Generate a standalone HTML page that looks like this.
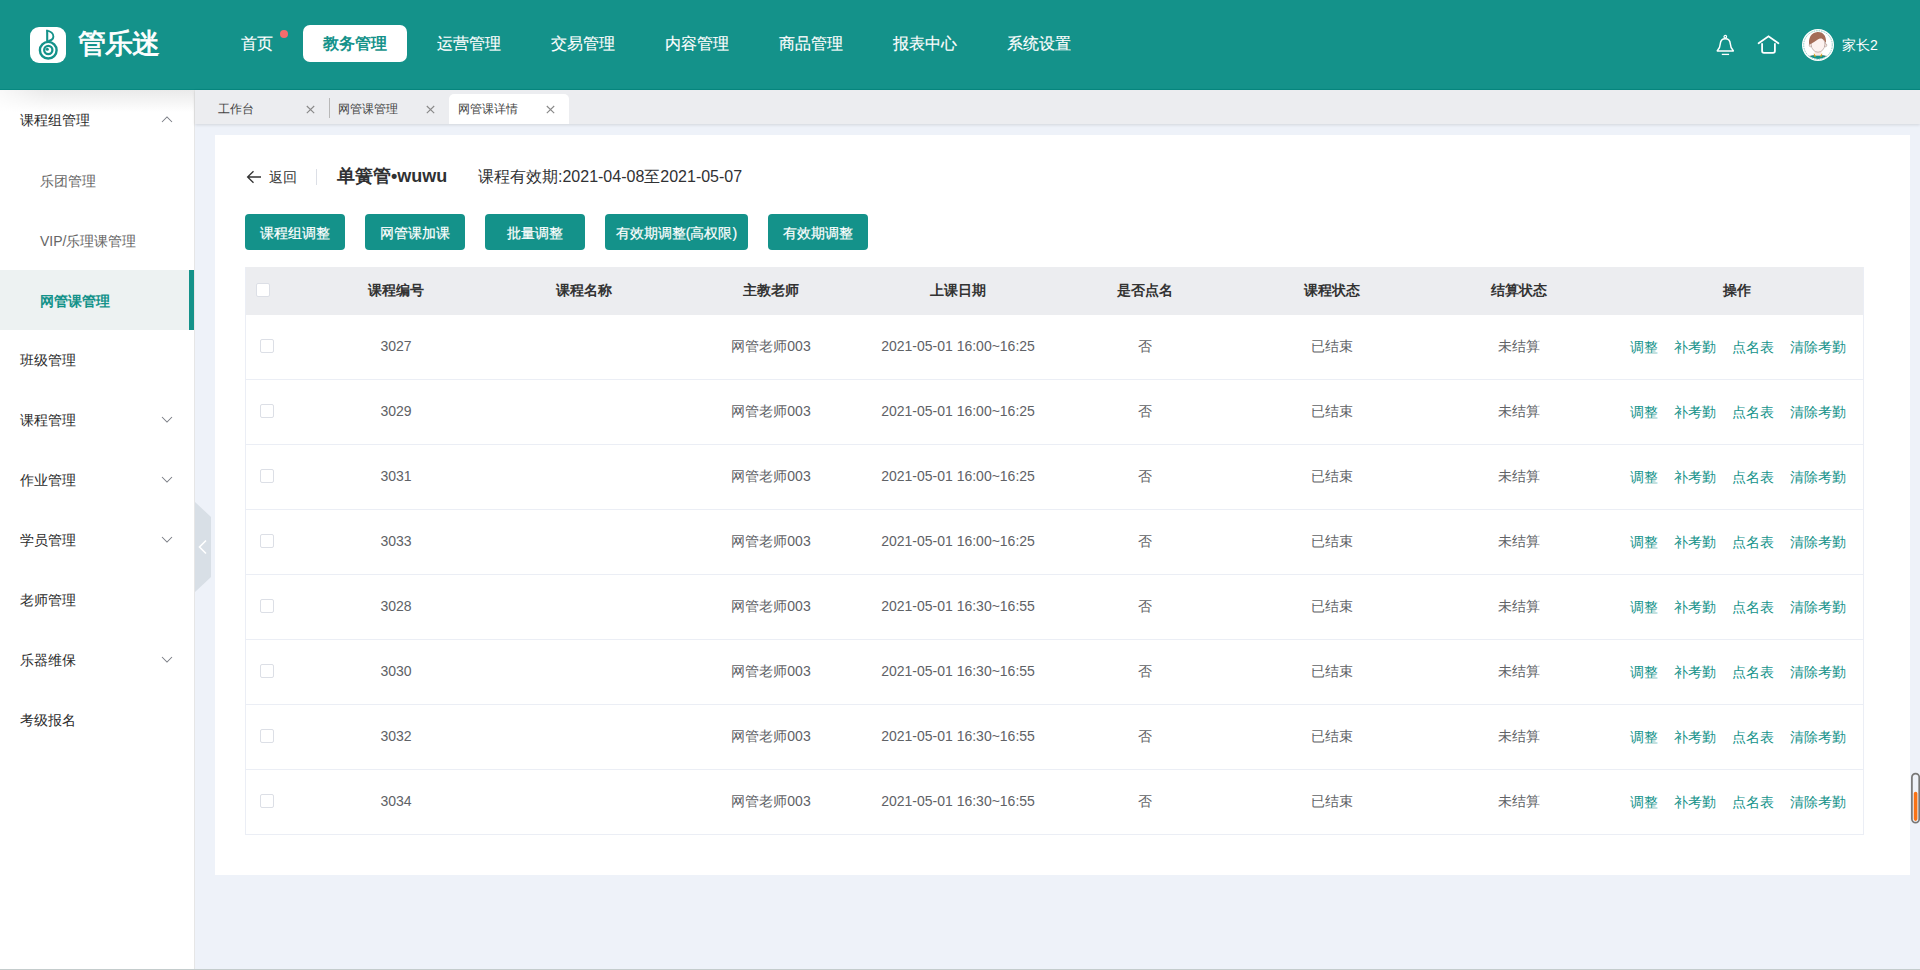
<!DOCTYPE html>
<html><head><meta charset="utf-8"><style>
*{box-sizing:border-box;margin:0;padding:0}
html,body{width:1920px;height:970px;overflow:hidden}
body{font-family:"Liberation Sans",sans-serif;background:#eef2f9;position:relative;color:#333}
.abs{position:absolute}
#hdr{left:0;top:0;width:1920px;height:90px;background:#14928a;border-bottom:1px solid #078880}
.logo{left:30px;top:27px;width:36px;height:36px;background:#fff;border-radius:9px}
.logo svg{display:block}
.brand{left:78px;top:26px;font-size:28px;line-height:36px;color:#fff;letter-spacing:-1px;-webkit-text-stroke:0.8px #fff}
.nav{top:25px;height:37px;line-height:37px;font-size:16px;color:#fff;white-space:nowrap;-webkit-text-stroke:0.15px #fff}
.nav.on{background:#fff;color:#14928a;-webkit-text-stroke:0;border-radius:7px;font-weight:bold;width:104px;text-align:center}
.dot{left:280px;top:30px;width:8px;height:8px;border-radius:50%;background:#f56c6c}
.uname{left:1842px;top:36px;font-size:14px;line-height:18px;color:#fff}
#side{left:0;top:90px;width:195px;height:880px;background:#fff;border-right:1px solid #e6e6e6}
#side .shade{left:0;top:0;width:194px;height:22px;background:linear-gradient(#eaeaea,#fff);-webkit-mask-image:linear-gradient(to right,rgba(0,0,0,.3) 0,#000 45px)}
.mi{left:20px;font-size:14px;color:#2b2b2b;line-height:20px;white-space:nowrap}
.si{left:40px;font-size:14px;color:#666;line-height:20px;white-space:nowrap}
.si.act{color:#14928a;font-weight:bold}
.sel{left:0;top:180px;width:194px;height:60px;background:#edf2f2;border-right:5px solid #14928a}
#tabs{left:195px;top:90px;width:1725px;height:34px;background:#ecedf0;box-shadow:0 1px 3px rgba(0,0,0,.12)}
.tab{top:102px;font-size:12px;color:#444;line-height:14px;white-space:nowrap}
#card{left:215px;top:135px;width:1695px;height:740px;background:#fff}
.btn{top:214px;height:36px;line-height:38px;-webkit-text-stroke:0.2px #fff;background:#14928a;color:#fff;font-size:14px;text-align:center;border-radius:4px;white-space:nowrap}
#tbl{left:245px;top:267px;width:1619px;height:568px;border:1px solid #ebeef5;border-top:none}
.th{top:267px;left:245px;width:1619px;height:48px;background:#ecedf0}
.hc{top:282px;font-size:14px;font-weight:bold;color:#333;text-align:center;line-height:16px}
.cb{width:14px;height:14px;border:1px solid #dcdfe6;border-radius:2px;background:#fff}
.row{left:245px;width:1619px;height:65px;border-bottom:1px solid #ebeef5}
.c{font-size:14px;color:#606266;text-align:center;line-height:16px;white-space:nowrap}
.op{font-size:14px;color:#14928a;line-height:16px;white-space:nowrap}

</style></head><body>
<div id="hdr" class="abs">
<div class="logo abs"><svg width="36" height="36" viewBox="0 0 36 36">
<path d="M17.2 14.4 V2.8" fill="none" stroke="#14928a" stroke-width="2.1"/>
<path d="M16.4 3.6 C20.8 3.8 23.6 6.8 23.4 9.6 C23.2 12.2 21 13.6 18.2 13.9" fill="none" stroke="#14928a" stroke-width="1.9" stroke-linejoin="round"/>
<circle cx="18.25" cy="23.2" r="8.35" fill="none" stroke="#14928a" stroke-width="2.4"/>
<circle cx="18.3" cy="23" r="4.1" fill="none" stroke="#14928a" stroke-width="2.3"/>
<circle cx="17.3" cy="22.2" r="1.5" fill="#14928a"/>
</svg></div>
<div class="brand abs">管乐迷</div>
<div class="dot abs"></div>
<div class="nav abs" style="left:241px">首页</div>
<div class="nav abs on" style="left:303px">教务管理</div>
<div class="nav abs" style="left:437px">运营管理</div>
<div class="nav abs" style="left:551px">交易管理</div>
<div class="nav abs" style="left:665px">内容管理</div>
<div class="nav abs" style="left:779px">商品管理</div>
<div class="nav abs" style="left:893px">报表中心</div>
<div class="nav abs" style="left:1007px">系统设置</div>
<svg class="abs" style="left:1714px;top:33px" width="22" height="24" viewBox="0 0 22 24">
<ellipse cx="11.3" cy="3.7" rx="1.3" ry="1.25" fill="none" stroke="#fff" stroke-width="1.2"/>
<path d="M11.3 5.7 C8.1 5.7 6.5 7.8 6.3 10.8 C6.1 14 5.4 15.6 3.6 17.3 C3 17.9 3.2 18.1 4 18.1 H18.6 C19.4 18.1 19.6 17.9 19 17.3 C17.2 15.6 16.5 14 16.3 10.8 C16.1 7.8 14.5 5.7 11.3 5.7 Z" fill="none" stroke="#fff" stroke-width="1.5" stroke-linejoin="round"/>
<path d="M7.8 21.4 H15.1" stroke="#fff" stroke-width="1.3"/>
</svg>
<svg class="abs" style="left:1756px;top:33px" width="25" height="23" viewBox="0 0 25 23">
<path d="M2.6 10.2 L12.5 3.3 L22.4 10.2" fill="none" stroke="#fff" stroke-width="1.8" stroke-linejoin="miter" stroke-linecap="round"/>
<path d="M6.1 10.3 V18 Q6.1 19.9 8 19.9 H17 Q18.9 19.9 18.9 18 V10.3" fill="none" stroke="#fff" stroke-width="1.8"/>
</svg>
<svg class="abs" style="left:1800px;top:27px" width="36" height="36" viewBox="0 0 36 36">
<defs><clipPath id="av"><circle cx="18" cy="18" r="13.9"/></clipPath></defs>
<circle cx="18" cy="18" r="16" fill="#fff"/>
<circle cx="18" cy="18" r="14.3" fill="none" stroke="#6fbfb8" stroke-width="0.8" stroke-dasharray="1.6 0.9"/>
<g clip-path="url(#av)">
<path d="M5 36 V31.6 Q9 28.6 14 28.2 H22 Q27 28.6 31 31.6 V36 Z" fill="#14928a" stroke="#4d5a58" stroke-width="0.45"/>
<rect x="14.6" y="22.6" width="6.8" height="6" fill="#fbe9e5"/>
<path d="M13.8 25.9 L16.1 29.4 L14.3 29.7 Z M22.2 25.9 L19.9 29.4 L21.7 29.7 Z" fill="#d9a20c"/>
<ellipse cx="10.6" cy="18.2" rx="1.4" ry="1.6" fill="#f6e7e4" stroke="#8a6d66" stroke-width="0.4"/>
<ellipse cx="25.4" cy="18.2" rx="1.4" ry="1.6" fill="#f6e7e4" stroke="#8a6d66" stroke-width="0.4"/>
<ellipse cx="18" cy="17.2" rx="6.9" ry="8" fill="#fdf2f0" stroke="#8a6d66" stroke-width="0.45"/>
<path d="M9.2 17.6 C8.2 11.4 11 5.6 17.6 5.1 C23.8 4.9 26.8 9.8 25.9 16.6 C25.2 14.2 24 12.6 22.4 11.9 C20.8 11.3 19.2 11.5 17.4 12.7 C15 14.3 12.6 16 9.2 17.6 Z" fill="#a46d58"/>
</g>
</svg>
<div class="uname abs">家长2</div>
</div>
<div id="side" class="abs"><div class="shade abs"></div>
<div class="sel abs"></div>
<div class="mi abs" style="top:20px">课程组管理</div>
<svg class="abs" style="left:161px;top:26px" width="12" height="7" viewBox="0 0 12 7"><path d="M1 6 L6 1 L11 6" fill="none" stroke="#7a7d85" stroke-width="1.05"/></svg>
<div class="si abs" style="top:81px">乐团管理</div>
<div class="si abs" style="top:141px">VIP/乐理课管理</div>
<div class="si act abs" style="top:201px">网管课管理</div>
<div class="mi abs" style="top:260px">班级管理</div>
<div class="mi abs" style="top:320px">课程管理</div>
<svg class="abs" style="left:161px;top:326px" width="12" height="7" viewBox="0 0 12 7"><path d="M1 1 L6 6 L11 1" fill="none" stroke="#7a7d85" stroke-width="1.05"/></svg>
<div class="mi abs" style="top:380px">作业管理</div>
<svg class="abs" style="left:161px;top:386px" width="12" height="7" viewBox="0 0 12 7"><path d="M1 1 L6 6 L11 1" fill="none" stroke="#7a7d85" stroke-width="1.05"/></svg>
<div class="mi abs" style="top:440px">学员管理</div>
<svg class="abs" style="left:161px;top:446px" width="12" height="7" viewBox="0 0 12 7"><path d="M1 1 L6 6 L11 1" fill="none" stroke="#7a7d85" stroke-width="1.05"/></svg>
<div class="mi abs" style="top:500px">老师管理</div>
<div class="mi abs" style="top:560px">乐器维保</div>
<svg class="abs" style="left:161px;top:566px" width="12" height="7" viewBox="0 0 12 7"><path d="M1 1 L6 6 L11 1" fill="none" stroke="#7a7d85" stroke-width="1.05"/></svg>
<div class="mi abs" style="top:620px">考级报名</div>
</div>
<svg class="abs" style="left:195px;top:502px" width="16" height="90" viewBox="0 0 16 90">
<path d="M0 0 L16 15 V75 L0 90 Z" fill="#d8dfe6"/>
<path d="M11 38.5 L4.5 45 L11 51.5" fill="none" stroke="#fff" stroke-width="1.6"/>
</svg>
<div id="tabs" class="abs"></div>
<div class="abs" style="left:449px;top:94px;width:120px;height:30px;background:#fff;border-radius:5px 5px 0 0"></div>
<div class="abs" style="left:329px;top:98px;width:1px;height:20px;background:#b8b8b8"></div>
<div class="tab abs" style="left:218px">工作台</div>
<svg class="abs tx" style="left:306px;top:105px" width="9" height="9" viewBox="0 0 9 9"><path d="M0.8 1 L8.2 8.2 M8.2 1 L0.8 8.2" stroke="#888" stroke-width="1.1"/></svg>
<div class="tab abs" style="left:338px">网管课管理</div>
<svg class="abs tx" style="left:426px;top:105px" width="9" height="9" viewBox="0 0 9 9"><path d="M0.8 1 L8.2 8.2 M8.2 1 L0.8 8.2" stroke="#888" stroke-width="1.1"/></svg>
<div class="tab abs" style="left:458px">网管课详情</div>
<svg class="abs tx" style="left:546px;top:105px" width="9" height="9" viewBox="0 0 9 9"><path d="M0.8 1 L8.2 8.2 M8.2 1 L0.8 8.2" stroke="#888" stroke-width="1.1"/></svg>
<div id="card" class="abs"></div>
<svg class="abs" style="left:246px;top:170px" width="16" height="14" viewBox="0 0 16 14"><path d="M15 7 H2 M7.5 1.2 L1.6 7 L7.5 12.8" fill="none" stroke="#333" stroke-width="1.3"/></svg>
<div class="abs" style="left:269px;top:168px;font-size:14px;line-height:18px;color:#333">返回</div>
<div class="abs" style="left:316px;top:169px;width:1px;height:16px;background:#dcdfe6"></div>
<div class="abs" style="left:337px;top:165px;font-size:18px;line-height:22px;font-weight:bold;color:#303133">单簧管•wuwu</div>
<div class="abs" style="left:478px;top:167px;font-size:16px;line-height:20px;color:#303133">课程有效期:2021-04-08至2021-05-07</div>
<div class="btn abs" style="left:245px;width:100px">课程组调整</div>
<div class="btn abs" style="left:365px;width:100px">网管课加课</div>
<div class="btn abs" style="left:485px;width:100px">批量调整</div>
<div class="btn abs" style="left:605px;width:143px">有效期调整(高权限)</div>
<div class="btn abs" style="left:768px;width:100px">有效期调整</div>
<div class="th abs"></div>
<div id="tbl" class="abs"></div>
<div class="cb abs" style="left:256px;top:283px"></div>
<div class="hc abs" style="left:296px;width:200px">课程编号</div>
<div class="hc abs" style="left:484px;width:200px">课程名称</div>
<div class="hc abs" style="left:671px;width:200px">主教老师</div>
<div class="hc abs" style="left:858px;width:200px">上课日期</div>
<div class="hc abs" style="left:1045px;width:200px">是否点名</div>
<div class="hc abs" style="left:1232px;width:200px">课程状态</div>
<div class="hc abs" style="left:1419px;width:200px">结算状态</div>
<div class="hc abs" style="left:1637px;width:200px">操作</div>
<div class="row abs" style="top:315px"></div>
<div class="cb abs" style="left:260px;top:339px"></div>
<div class="c abs" style="left:276px;width:240px;top:338px">3027</div>
<div class="c abs" style="left:651px;width:240px;top:338px">网管老师003</div>
<div class="c abs" style="left:838px;width:240px;top:338px">2021-05-01 16:00~16:25</div>
<div class="c abs" style="left:1025px;width:240px;top:338px">否</div>
<div class="c abs" style="left:1212px;width:240px;top:338px">已结束</div>
<div class="c abs" style="left:1399px;width:240px;top:338px">未结算</div>
<div class="op abs" style="left:1630px;top:339px">调整</div>
<div class="op abs" style="left:1674px;top:339px">补考勤</div>
<div class="op abs" style="left:1732px;top:339px">点名表</div>
<div class="op abs" style="left:1790px;top:339px">清除考勤</div>
<div class="row abs" style="top:380px"></div>
<div class="cb abs" style="left:260px;top:404px"></div>
<div class="c abs" style="left:276px;width:240px;top:403px">3029</div>
<div class="c abs" style="left:651px;width:240px;top:403px">网管老师003</div>
<div class="c abs" style="left:838px;width:240px;top:403px">2021-05-01 16:00~16:25</div>
<div class="c abs" style="left:1025px;width:240px;top:403px">否</div>
<div class="c abs" style="left:1212px;width:240px;top:403px">已结束</div>
<div class="c abs" style="left:1399px;width:240px;top:403px">未结算</div>
<div class="op abs" style="left:1630px;top:404px">调整</div>
<div class="op abs" style="left:1674px;top:404px">补考勤</div>
<div class="op abs" style="left:1732px;top:404px">点名表</div>
<div class="op abs" style="left:1790px;top:404px">清除考勤</div>
<div class="row abs" style="top:445px"></div>
<div class="cb abs" style="left:260px;top:469px"></div>
<div class="c abs" style="left:276px;width:240px;top:468px">3031</div>
<div class="c abs" style="left:651px;width:240px;top:468px">网管老师003</div>
<div class="c abs" style="left:838px;width:240px;top:468px">2021-05-01 16:00~16:25</div>
<div class="c abs" style="left:1025px;width:240px;top:468px">否</div>
<div class="c abs" style="left:1212px;width:240px;top:468px">已结束</div>
<div class="c abs" style="left:1399px;width:240px;top:468px">未结算</div>
<div class="op abs" style="left:1630px;top:469px">调整</div>
<div class="op abs" style="left:1674px;top:469px">补考勤</div>
<div class="op abs" style="left:1732px;top:469px">点名表</div>
<div class="op abs" style="left:1790px;top:469px">清除考勤</div>
<div class="row abs" style="top:510px"></div>
<div class="cb abs" style="left:260px;top:534px"></div>
<div class="c abs" style="left:276px;width:240px;top:533px">3033</div>
<div class="c abs" style="left:651px;width:240px;top:533px">网管老师003</div>
<div class="c abs" style="left:838px;width:240px;top:533px">2021-05-01 16:00~16:25</div>
<div class="c abs" style="left:1025px;width:240px;top:533px">否</div>
<div class="c abs" style="left:1212px;width:240px;top:533px">已结束</div>
<div class="c abs" style="left:1399px;width:240px;top:533px">未结算</div>
<div class="op abs" style="left:1630px;top:534px">调整</div>
<div class="op abs" style="left:1674px;top:534px">补考勤</div>
<div class="op abs" style="left:1732px;top:534px">点名表</div>
<div class="op abs" style="left:1790px;top:534px">清除考勤</div>
<div class="row abs" style="top:575px"></div>
<div class="cb abs" style="left:260px;top:599px"></div>
<div class="c abs" style="left:276px;width:240px;top:598px">3028</div>
<div class="c abs" style="left:651px;width:240px;top:598px">网管老师003</div>
<div class="c abs" style="left:838px;width:240px;top:598px">2021-05-01 16:30~16:55</div>
<div class="c abs" style="left:1025px;width:240px;top:598px">否</div>
<div class="c abs" style="left:1212px;width:240px;top:598px">已结束</div>
<div class="c abs" style="left:1399px;width:240px;top:598px">未结算</div>
<div class="op abs" style="left:1630px;top:599px">调整</div>
<div class="op abs" style="left:1674px;top:599px">补考勤</div>
<div class="op abs" style="left:1732px;top:599px">点名表</div>
<div class="op abs" style="left:1790px;top:599px">清除考勤</div>
<div class="row abs" style="top:640px"></div>
<div class="cb abs" style="left:260px;top:664px"></div>
<div class="c abs" style="left:276px;width:240px;top:663px">3030</div>
<div class="c abs" style="left:651px;width:240px;top:663px">网管老师003</div>
<div class="c abs" style="left:838px;width:240px;top:663px">2021-05-01 16:30~16:55</div>
<div class="c abs" style="left:1025px;width:240px;top:663px">否</div>
<div class="c abs" style="left:1212px;width:240px;top:663px">已结束</div>
<div class="c abs" style="left:1399px;width:240px;top:663px">未结算</div>
<div class="op abs" style="left:1630px;top:664px">调整</div>
<div class="op abs" style="left:1674px;top:664px">补考勤</div>
<div class="op abs" style="left:1732px;top:664px">点名表</div>
<div class="op abs" style="left:1790px;top:664px">清除考勤</div>
<div class="row abs" style="top:705px"></div>
<div class="cb abs" style="left:260px;top:729px"></div>
<div class="c abs" style="left:276px;width:240px;top:728px">3032</div>
<div class="c abs" style="left:651px;width:240px;top:728px">网管老师003</div>
<div class="c abs" style="left:838px;width:240px;top:728px">2021-05-01 16:30~16:55</div>
<div class="c abs" style="left:1025px;width:240px;top:728px">否</div>
<div class="c abs" style="left:1212px;width:240px;top:728px">已结束</div>
<div class="c abs" style="left:1399px;width:240px;top:728px">未结算</div>
<div class="op abs" style="left:1630px;top:729px">调整</div>
<div class="op abs" style="left:1674px;top:729px">补考勤</div>
<div class="op abs" style="left:1732px;top:729px">点名表</div>
<div class="op abs" style="left:1790px;top:729px">清除考勤</div>
<div class="row abs" style="top:770px"></div>
<div class="cb abs" style="left:260px;top:794px"></div>
<div class="c abs" style="left:276px;width:240px;top:793px">3034</div>
<div class="c abs" style="left:651px;width:240px;top:793px">网管老师003</div>
<div class="c abs" style="left:838px;width:240px;top:793px">2021-05-01 16:30~16:55</div>
<div class="c abs" style="left:1025px;width:240px;top:793px">否</div>
<div class="c abs" style="left:1212px;width:240px;top:793px">已结束</div>
<div class="c abs" style="left:1399px;width:240px;top:793px">未结算</div>
<div class="op abs" style="left:1630px;top:794px">调整</div>
<div class="op abs" style="left:1674px;top:794px">补考勤</div>
<div class="op abs" style="left:1732px;top:794px">点名表</div>
<div class="op abs" style="left:1790px;top:794px">清除考勤</div>
<svg class="abs" style="left:1910px;top:772px" width="10" height="52" viewBox="0 0 10 52">
<rect x="1.9" y="1.6" width="7.3" height="49" rx="3.65" fill="#eef2f9" stroke="#777" stroke-width="1.7"/>
<rect x="3.8" y="19.7" width="3.6" height="29.2" rx="1.8" fill="#f97316"/>
</svg>
<div class="abs" style="left:0;top:969px;width:1920px;height:1px;background:#c4cccc"></div>
</body></html>
